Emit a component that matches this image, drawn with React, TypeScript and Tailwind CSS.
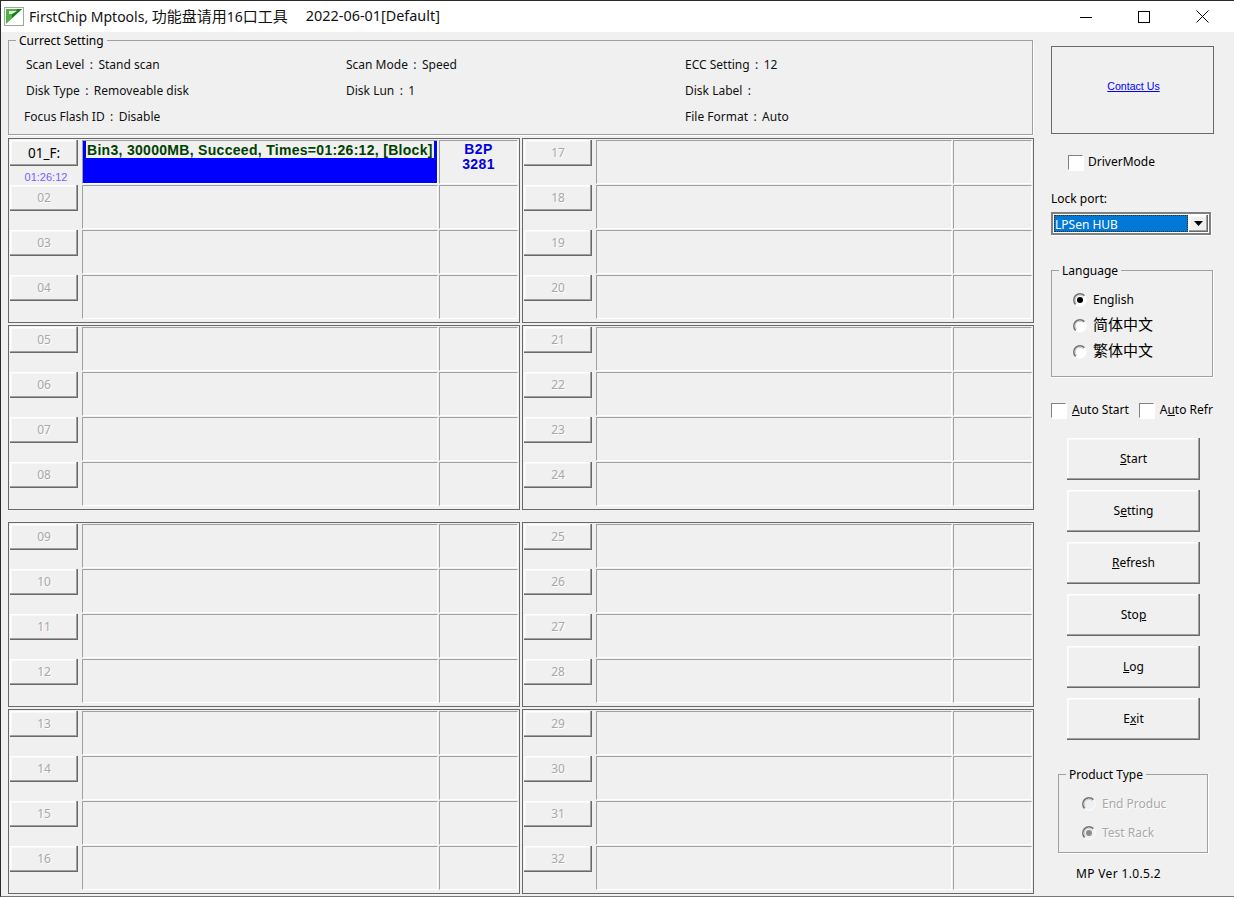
import type { ReactNode } from "react";

const UI_FONT = "font-['Tahoma','Noto_Sans','Noto_Sans_CJK_SC',sans-serif]";

const raised =
  "shadow-[inset_-1px_-1px_0_#696969,inset_-2px_-2px_0_#a0a0a0,inset_1px_1px_0_#fff,inset_2px_2px_0_#f8f8f8]";

function GroupBox({
  title,
  className,
  children,
}: {
  title: string;
  className: string;
  children: ReactNode;
}) {
  return (
    <div className={`relative border border-[#a0a0a0] shadow-[1px_1px_0_#fff] ${className}`}>
      <span className="absolute left-[7px] top-[-8px] bg-[#f0f0f0] px-[3px] text-[12px] leading-[16px] text-black">
        {title}
      </span>
      {children}
    </div>
  );
}

function Cell({ className, children }: { className: string; children?: ReactNode }) {
  return (
    <div className={`h-[44px] border-t border-l border-[#a0a0a0] border-r-white border-b-white border-r border-b ${className}`}>
      {children}
    </div>
  );
}

function PortRow({ label }: { label: number }) {
  const text = String(label).padStart(2, "0");
  return (
    <div className="flex h-[45px]">
      <button
        className={`h-[26px] w-[68px] text-center text-[12px] text-[#a8a8a8] [text-shadow:1px_1px_0_#fff] ${raised}`}
      >
        {text}
      </button>
      <Cell className="ml-[4px] w-[356px]" />
      <Cell className="ml-[1px] w-[79px]" />
    </div>
  );
}

function ActivePortRow() {
  return (
    <div className="flex h-[45px]">
      <div className="w-[68px]">
        <button className={`h-[26px] w-full text-center text-[13.5px] text-black ${raised}`}>01_F:</button>
        <div className="ml-[4px] mt-[5px] text-center font-['Liberation_Sans',sans-serif] text-[11px] leading-[13px] text-[#7b5cff]">
          01:26:12
        </div>
      </div>
      <Cell className="ml-[4px] w-[356px] bg-[#0000ff]">
        <div className="ml-[3px] w-fit whitespace-pre bg-[#f0f0f0] pt-[1px] pl-[1px] pr-[1px] font-['Liberation_Sans',sans-serif] text-[14px] font-bold leading-[16px] tracking-[0.3px] text-[#004000]">
          Bin3, 30000MB, Succeed, Times=01:26:12, [Block]
        </div>
      </Cell>
      <Cell className="ml-[1px] w-[79px] pt-[1px] text-center font-['Liberation_Sans',sans-serif] text-[14px] font-bold leading-[15px] tracking-[0.4px] text-[#0000e0]">
        B2P
        <br />
        3281
      </Cell>
    </div>
  );
}

function PortPanel({ start }: { start: number }) {
  const labels = [start, start + 1, start + 2, start + 3];
  return (
    <div className="h-[185px] border border-[#696969] p-[1px]">
      {labels.map((n) => (n === 1 ? <ActivePortRow key={n} /> : <PortRow key={n} label={n} />))}
    </div>
  );
}

function Checkbox({ className }: { className?: string }) {
  return (
    <span
      className={`block h-[15px] w-[15px] shrink-0 border border-[#808080] border-r-white border-b-white bg-white shadow-[1px_1px_0_#fff] ${className ?? ""}`}
    />
  );
}

function Radio({
  label,
  checked,
  disabled,
  labelClass,
}: {
  label: string;
  checked?: boolean;
  disabled?: boolean;
  labelClass?: string;
}) {
  return (
    <div className="flex h-[16px] items-center">
      <svg width="14" height="14" viewBox="0 0 14 14" className="shrink-0">
        <circle cx="7" cy="7" r="6.2" fill={disabled ? "#f0f0f0" : "#fff"} stroke="#fff" />
        <path d="M2.6 11.4 A6.2 6.2 0 0 1 11.4 2.6" fill="none" stroke="#707070" strokeWidth="1.5" />
        <path d="M3.6 10.4 A4.8 4.8 0 0 1 10.4 3.6" fill="none" stroke="#c4c4c4" strokeWidth="1" />
        {checked && <circle cx="7" cy="7" r="3" fill={disabled ? "#8c8c8c" : "#000"} />}
      </svg>
      <span
        className={`ml-[6px] whitespace-nowrap ${
          disabled ? "text-[#a8a8a8] [text-shadow:1px_1px_0_#fff]" : "text-black"
        } ${labelClass ?? ""}`}
      >
        {label}
      </span>
    </div>
  );
}

function ActionButton({ children }: { children: ReactNode }) {
  return (
    <button className={`block h-[42px] w-[133px] text-center text-[12px] text-black ${raised}`}>{children}</button>
  );
}

function Setting({ label, value }: { label: string; value?: string }) {
  return (
    <div className="whitespace-pre">
      {label}
      <span className="inline-block w-[14px] text-center">:</span>
      {value}
    </div>
  );
}

export default function App() {
  return (
    <div
      className={`flex h-[897px] w-[1234px] flex-col overflow-hidden border-t border-l border-t-[#2b2b2b] border-l-[#2b2b2b] border-b border-b-[#777] bg-[#f0f0f0] text-[12px] leading-[16px] ${UI_FONT}`}
    >
      {/* Title bar */}
      <div className="flex h-[31px] shrink-0 items-center bg-white">
        <svg width="20" height="19" viewBox="0 0 20 19" className="ml-[3px] shrink-0">
          <rect x="0.5" y="0.5" width="19" height="18" fill="#fff" stroke="#9aaa9a" />
          <path d="M2 2H18L2 17Z" fill="#4cb244" />
          <path d="M14 2H18L8 11V7Z" fill="#1f7a1f" />
          <path d="M5 4H13L8 7H5Z" fill="#e4f4e0" />
        </svg>
        <div className="-mt-[1px] ml-[5px] whitespace-pre font-['Noto_Sans','Noto_Sans_CJK_SC',sans-serif] text-[14px] text-[#111]">
          FirstChip Mptools, <span className="text-[15px]">功能盘请用</span>16<span className="text-[15px]">口工具</span>
        </div>
        <div className="-mt-[1px] ml-[18px] font-['Noto_Sans',sans-serif] text-[14.4px] text-[#111]">
          2022-06-01[Default]
        </div>
        <div className="ml-auto flex h-full items-center">
          <svg width="12" height="12" viewBox="0 0 12 12" className="mr-[46px]">
            <path d="M0 6.5H12" stroke="#000" />
          </svg>
          <svg width="12" height="12" viewBox="0 0 12 12" className="mr-[46px]">
            <rect x="0.5" y="0.5" width="11" height="11" fill="none" stroke="#000" />
          </svg>
          <svg width="13" height="13" viewBox="0 0 13 13" className="mr-[25px]">
            <path d="M0.5 0.5L12.5 12.5M12.5 0.5L0.5 12.5" stroke="#000" />
          </svg>
        </div>
      </div>

      <div className="flex flex-1">
        {/* Left side */}
        <div className="ml-[7px] mt-[8px] w-[1026px] shrink-0">
          <GroupBox title="Currect Setting" className="h-[95px] w-[1025px]">
            <div className="grid grid-cols-[320px_339px_1fr] gap-y-[10px] pl-[17px] pt-[16px] text-[#111]">
              <Setting label="Scan Level" value="Stand scan" />
              <Setting label="Scan Mode" value="Speed" />
              <Setting label="ECC Setting" value="12" />
              <Setting label="Disk Type" value="Removeable disk" />
              <Setting label="Disk Lun" value="1" />
              <Setting label="Disk Label" />
              <div className="-ml-[2px]">
                <Setting label="Focus Flash ID" value="Disable" />
              </div>
              <div />
              <Setting label="File Format" value="Auto" />
            </div>
          </GroupBox>

          <div className="mt-[3px] grid grid-cols-2 gap-[2px]">
            <PortPanel start={1} />
            <PortPanel start={17} />
            <PortPanel start={5} />
            <PortPanel start={21} />
          </div>
          <div className="mt-[12px] grid grid-cols-2 gap-[2px]">
            <PortPanel start={9} />
            <PortPanel start={25} />
            <PortPanel start={13} />
            <PortPanel start={29} />
          </div>
        </div>

        {/* Right side */}
        <div className="ml-[17px] w-[170px] shrink-0 pt-[14px]">
          <div className="flex h-[88px] w-[163px] items-center justify-center border border-[#696969] pb-[8px] pl-[2px]">
            <a className="font-['Liberation_Sans',sans-serif] text-[10.6px] text-[#0000ff] underline">Contact Us</a>
          </div>

          <div className="ml-[17px] mt-[20px] flex items-center">
            <Checkbox />
            <span className="ml-[5px]">DriverMode</span>
          </div>

          <div className="mt-[21px]">Lock port:</div>
          <div className="mt-[5px] flex h-[23px] w-[160px] items-center border-2 border-[#808080] bg-white p-[1px] shadow-[1px_1px_0_#fff]">
            <div className="flex h-full flex-1 items-center bg-[#0078d7] pl-[1px] pt-[3px] text-white outline-1 -outline-offset-1 outline-dotted outline-[#3a2a10]">
              LPSen HUB
            </div>
            <div className={`ml-[1px] flex h-full w-[19px] items-center justify-center bg-[#f0f0f0] ${raised}`}>
              <svg width="9" height="5" viewBox="0 0 9 5">
                <path d="M0 0H9L4.5 5Z" fill="#000" />
              </svg>
            </div>
          </div>

          <GroupBox title="Language" className="mt-[35px] h-[107px] w-[162px]">
            <div className="flex flex-col gap-[10px] pl-[21px] pt-[21px]">
              <Radio label="English" checked />
              <Radio label="简体中文" labelClass="-mt-[4px] text-[15px]" />
              <Radio label="繁体中文" labelClass="-mt-[4px] text-[15px]" />
            </div>
          </GroupBox>

          <div className="mt-[25px] flex items-center">
            <Checkbox />
            <span className="ml-[6px] whitespace-nowrap">
              <u>A</u>uto Start
            </span>
            <Checkbox className="ml-[10px]" />
            <span className="ml-[6px] whitespace-nowrap">
              A<u>u</u>to Refr
            </span>
          </div>

          <div className="ml-[16px] mt-[20px] flex flex-col gap-[10px]">
            <ActionButton>
              <u>S</u>tart
            </ActionButton>
            <ActionButton>
              S<u>e</u>tting
            </ActionButton>
            <ActionButton>
              <u>R</u>efresh
            </ActionButton>
            <ActionButton>
              Sto<u>p</u>
            </ActionButton>
            <ActionButton>
              <u>L</u>og
            </ActionButton>
            <ActionButton>
              E<u>x</u>it
            </ActionButton>
          </div>

          <GroupBox title="Product Type" className="ml-[7px] mt-[34px] h-[79px] w-[150px]">
            <div className="flex flex-col gap-[13px] pl-[23px] pt-[21px]">
              <Radio label="End Produc" disabled />
              <Radio label="Test Rack" checked disabled />
            </div>
          </GroupBox>

          <div className="ml-[25px] mt-[13px] tracking-[0.35px]">MP Ver 1.0.5.2</div>
        </div>
      </div>
    </div>
  );
}
